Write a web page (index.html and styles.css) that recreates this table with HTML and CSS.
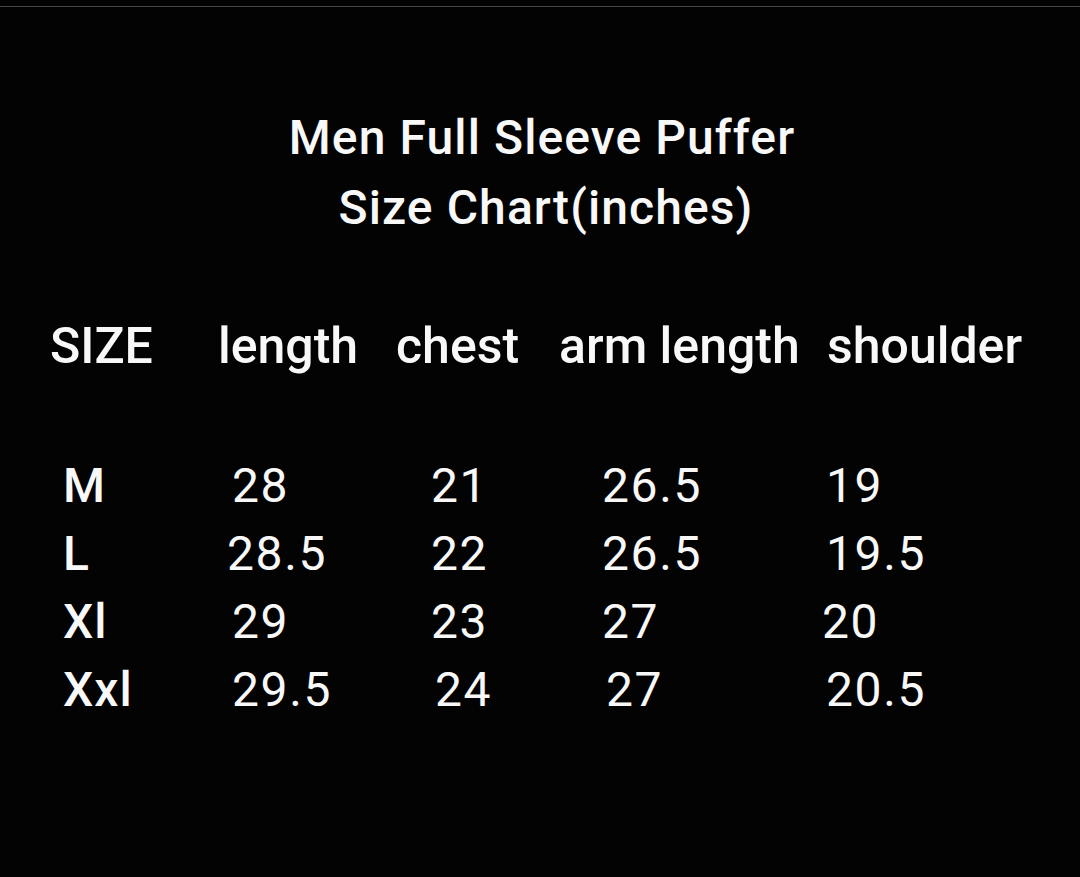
FILE: index.html
```
<!DOCTYPE html>
<html>
<head>
<meta charset="utf-8">
<link rel="stylesheet" href="styles.css">
</head>
<body>
<div class="topline"></div>
<div class="title">
  <div>Men Full Sleeve Puffer</div>
  <div class="sub">Size Chart(inches)</div>
</div>
<div class="head">
  <span>SIZE</span>
  <span>length</span>
  <span>chest</span>
  <span>arm length</span>
  <span>shoulder</span>
</div>
<div class="rows">
  <span class="sz">M</span><span>28</span><span>21</span><span>26.5</span><span class="c5">19</span>
  <span class="sz">L</span><span class="l1">28.5</span><span>22</span><span>26.5</span><span class="c5">19.5</span>
  <span class="sz">Xl</span><span>29</span><span>23</span><span>27</span><span class="c5 l1">20</span>
  <span class="sz">Xxl</span><span>29.5</span><span class="r1">24</span><span class="r1">27</span><span class="c5">20.5</span>
</div>
</body>
</html>
```
FILE: styles.css
```
html, body {
  margin: 0;
  padding: 0;
  background: #030303;
  height: 100%;
}
body {
  font-family: Roboto, "Liberation Sans", sans-serif;
  color: #f8f8f8;
}
.topline {
  height: 6px;
  border-bottom: 1px solid #474747;
}
.title {
  margin-top: 96px;
  font-size: 48px;
  font-weight: 500;
  line-height: 70px;
  letter-spacing: 1.1px;
  text-align: center;
  padding-left: 4px;
}
.title .sub {
  padding-left: 8px;
}
.head {
  margin-top: 73px;
  display: grid;
  grid-template-columns: 168px 178px 163px 268px auto;
  padding-left: 50px;
  font-size: 50px;
  font-weight: 500;
  line-height: 60px;
  white-space: nowrap;
}
.rows {
  margin-top: 76px;
  display: grid;
  grid-template-columns: 169px 199px 171px 223px auto;
  padding-left: 63px;
  font-size: 48px;
  line-height: 68px;
  letter-spacing: 1.6px;
  white-space: nowrap;
}
.rows .sz {
  font-weight: 500;
  letter-spacing: 1px;
}
.rows .c5 {
  margin-left: 1px;
}
.rows .l1 {
  margin-left: -5px;
}
.rows .c5.l1 {
  margin-left: -3px;
}
.rows .r1 {
  margin-left: 4px;
}
```
